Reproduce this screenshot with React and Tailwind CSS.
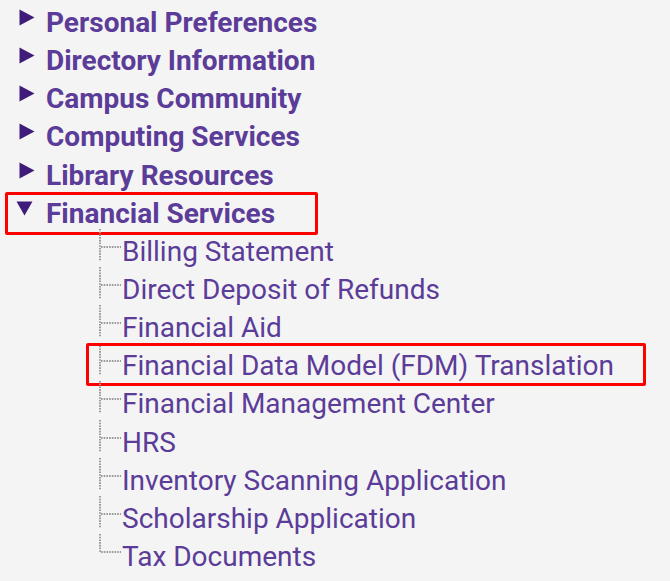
import React from "react";

const headers = [
  "Personal Preferences",
  "Directory Information",
  "Campus Community",
  "Computing Services",
  "Library Resources",
];

const children = [
  "Billing Statement",
  "Direct Deposit of Refunds",
  "Financial Aid",
  "Financial Data Model (FDM) Translation",
  "Financial Management Center",
  "HRS",
  "Inventory Scanning Application",
  "Scholarship Application",
  "Tax Documents",
];

function RightTri() {
  return (
    <svg width="16" height="17" viewBox="0 0 16 17" className="mt-[5px] ml-[19px] shrink-0">
      <polygon points="0.5,0.5 15.5,8.5 0.5,16.5" fill="#3f1c7a" />
    </svg>
  );
}

function DownTri() {
  return (
    <svg width="17" height="15" viewBox="0 0 17 15" className="mt-[6px] ml-[16px] shrink-0">
      <polygon points="0.5,0.5 16.5,0.5 8.5,14.5" fill="#3f1c7a" />
    </svg>
  );
}

function Connector({ last }) {
  return (
    <svg width="24" height="38" className="ml-[99px] shrink-0 overflow-visible">
      <line
        x1="1"
        y1="-4"
        x2="1"
        y2={last ? 15 : 28}
        stroke="#9a9a9a"
        strokeWidth="2"
        strokeDasharray="1.6 1.1"
      />
      <line
        x1="2"
        y1="14"
        x2="22"
        y2="14"
        stroke="#9a9a9a"
        strokeWidth="2"
        strokeDasharray="1.6 1.1"
      />
    </svg>
  );
}

export default function App() {
  return (
    <div
      className="min-h-screen w-full bg-[#f4f4f4] pt-[4px] text-[#5b3c98]"
      style={{ fontFamily: "Roboto, 'Noto Sans', sans-serif" }}
    >
      <ul className="flex flex-col">
        {headers.map((h) => (
          <li key={h} className="flex h-[38.15px] items-start">
            <RightTri />
            <span className="ml-[11px] text-[28px] font-bold leading-[38.15px] whitespace-nowrap">
              {h}
            </span>
          </li>
        ))}
        <li className="relative flex h-[38.15px] items-start">
          <DownTri />
          <span className="ml-[13px] text-[28px] font-bold leading-[38.15px] whitespace-nowrap">
            Financial Services
          </span>
          <div className="pointer-events-none absolute left-[5px] top-[-3px] h-[43px] w-[313px] rounded-[2px] border-[3px] border-[#fe0000]" />
        </li>
        {children.map((c, i) => (
          <li key={c} className="relative flex h-[38.15px] items-start">
            <Connector last={i === children.length - 1} />
            <span className="ml-[-1px] text-[28px] leading-[38.15px] whitespace-nowrap">{c}</span>
            {c.startsWith("Financial Data Model") && (
              <div className="pointer-events-none absolute left-[86px] top-[-4px] h-[43px] w-[560px] rounded-[2px] border-[3px] border-[#fe0000]" />
            )}
          </li>
        ))}
      </ul>
    </div>
  );
}
